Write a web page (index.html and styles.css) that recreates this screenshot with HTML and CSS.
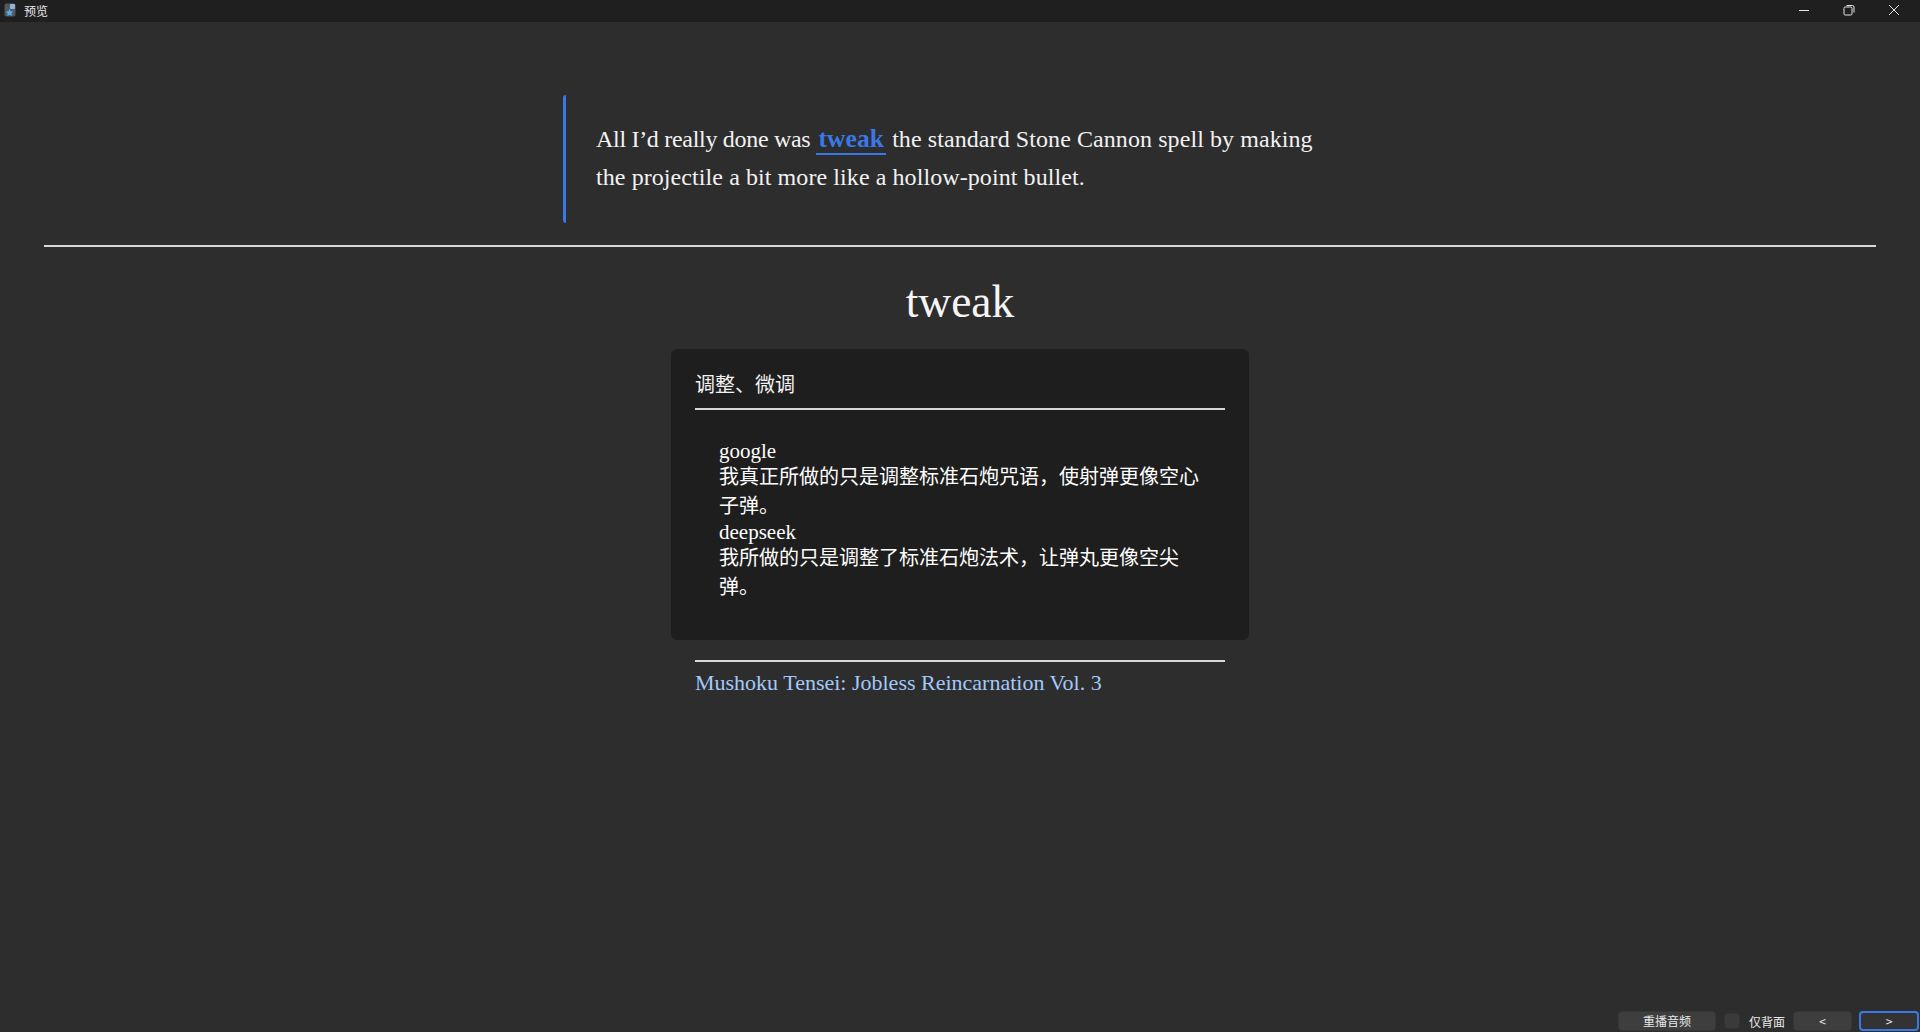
FILE: index.html
```html
<!DOCTYPE html>
<html lang="zh">
<head>
    <meta charset="UTF-8">
    <title>预览</title>
    <link rel="stylesheet" href="styles.css">
</head>
<body>
    <div class="window">
        <div class="titlebar">
            <div class="title">
                <svg class="app-icon" viewBox="0 0 12 14" width="12" height="14">
                    <rect x="0.5" y="0.5" width="11" height="13" rx="2" fill="#55585c"/>
                    <rect x="6" y="1" width="5" height="5" rx="1" fill="#8fb6dc"/>
                    <path d="M5.5 6 L6.7 8.3 L9.3 8.6 L7.4 10.4 L7.9 13 L5.5 11.8 L3.1 13 L3.6 10.4 L1.7 8.6 L4.3 8.3 Z" fill="#4fb0f2"/>
                </svg>
                <span>预览</span>
            </div>
            <div class="win-buttons">
                <svg viewBox="0 0 12 12" width="12" height="12"><path d="M1 6.5 H11" stroke="#e6e6e6" fill="none"/></svg>
                <svg viewBox="0 0 12 12" width="12" height="12"><rect x="1" y="3" width="8" height="8" rx="1.2" stroke="#e6e6e6" fill="none"/><path d="M3.5 1.5 H9.5 Q11 1.5 11 3 V8.5" stroke="#e6e6e6" fill="none"/></svg>
                <svg viewBox="0 0 12 12" width="12" height="12"><path d="M1 1 L11 11 M11 1 L1 11" stroke="#e6e6e6" fill="none"/></svg>
            </div>
        </div>

        <div class="content">
            <blockquote class="quote">
                <span class="lead">All I’d really done was</span>
                <a class="word" href="#">tweak</a>
                <span>the standard Stone Cannon spell by making</span>
                <span>the projectile a bit more like a hollow-point bullet.</span>
            </blockquote>
            <hr class="rule">
            <h1>tweak</h1>
            <div class="card">
                <div class="meaning">调整、微调</div>
                <div class="translations">
                    <div class="source">google</div>
                    <div class="sentence">我真正所做的只是调整标准石炮咒语，使射弹更像空心子弹。</div>
                    <div class="source">deepseek</div>
                    <div class="sentence">我所做的只是调整了标准石炮法术，让弹丸更像空尖弹。</div>
                </div>
            </div>
            <div class="book">
                <a href="#">Mushoku Tensei: Jobless Reincarnation Vol. 3</a>
            </div>
        </div>

        <div class="controls">
            <button class="btn replay">重播音频</button>
            <label class="back-only"><span class="check"></span>仅背面</label>
            <button class="btn nav">&lt;</button>
            <button class="btn nav focused">&gt;</button>
        </div>
    </div>
</body>
</html>
```

FILE: styles.css
```css
html, body {
    height: 100%;
}

body {
    margin: 0;
    background-color: #2d2d2d;
    color: #ffffff;
    font-family: "Liberation Serif", "Noto Sans CJK SC", serif;
    overflow: hidden;
}

.window {
    display: flex;
    flex-direction: column;
    height: 100vh;
}

/* Title bar */
.titlebar {
    display: flex;
    justify-content: space-between;
    align-items: center;
    box-sizing: border-box;
    height: 22px;
    padding-bottom: 2px;
    background-color: #1f1f1f;
    flex-shrink: 0;
}

.title {
    display: flex;
    align-items: center;
    gap: 8px;
    padding-left: 4px;
    font-family: "Noto Sans CJK SC", sans-serif;
    font-size: 12px;
    color: #e8e8e8;
}

.win-buttons {
    display: flex;
    gap: 33px;
    padding-right: 20px;
}

/* Reviewer content */
.content {
    flex-grow: 1;
    padding: 73px 44px 0;
}

.quote {
    width: 722px;
    margin: 0;
    margin-left: 519px;
    padding: 25px 0 27px 30px;
    border-left: 3px solid #3b78e7;
    border-radius: 3px;
    font-size: 24px;
    letter-spacing: 0.08px;
    line-height: 38px;
    color: #f2f2f2;
}

.lead {
    letter-spacing: -0.3px;
}

.word {
    color: #3b78e7;
    font-size: 25.5px;
    font-weight: bold;
    line-height: 1;
    text-decoration: none;
    border-bottom: 2px solid #3b78e7;
    padding: 0 2px;
}

.rule {
    margin: 22px 0 0;
    border: none;
    border-top: 2px solid #d8d8d8;
}

h1 {
    margin: 25px 0 17px;
    text-align: center;
    font-size: 45.5px;
    font-weight: normal;
    line-height: 60px;
    color: #f5f5f5;
}

.card {
    width: 530px;
    margin: 0 auto;
    padding: 20px 24px 38px;
    background-color: #1e1e1e;
    border-radius: 6px;
}

.meaning {
    padding-bottom: 10px;
    border-bottom: 2px solid #d8d8d8;
    font-size: 20px;
    color: #f2f2f2;
}

.translations {
    padding: 30px 24px 0;
    font-size: 20px;
}

.source {
    font-size: 21px;
    line-height: 23px;
}

.sentence {
    line-height: 29px;
}

.book {
    width: 530px;
    margin: 20px auto 0;
    padding-top: 8px;
    border-top: 2px solid #d8d8d8;
    font-size: 22px;
}

.book a {
    color: #a3c9fa;
    text-decoration: none;
}

/* Bottom controls */
.controls {
    display: flex;
    justify-content: flex-end;
    align-items: flex-start;
    gap: 7px;
    height: 21px;
    padding-right: 1px;
    flex-shrink: 0;
    font-family: "Noto Sans CJK SC", sans-serif;
}

.btn {
    height: 20px;
    padding: 0;
    background-color: #3e3e3e;
    border: 1px solid #363636;
    border-radius: 4px;
    color: #e8e8e8;
    font-family: inherit;
    font-size: 12px;
    line-height: 1;
}

.replay {
    width: 98px;
}

.nav {
    width: 59px;
}

.focused {
    width: 60px;
    background-color: #333333;
    border: 2px solid #3b78e7;
}

.back-only {
    display: flex;
    align-items: center;
    gap: 9px;
    margin: 0 1px;
    height: 20px;
    font-size: 12px;
    color: #e8e8e8;
}

.check {
    box-sizing: border-box;
    width: 16px;
    height: 16px;
    background-color: #3a3a3a;
    border: 1px solid #333;
    border-radius: 4px;
}
```
